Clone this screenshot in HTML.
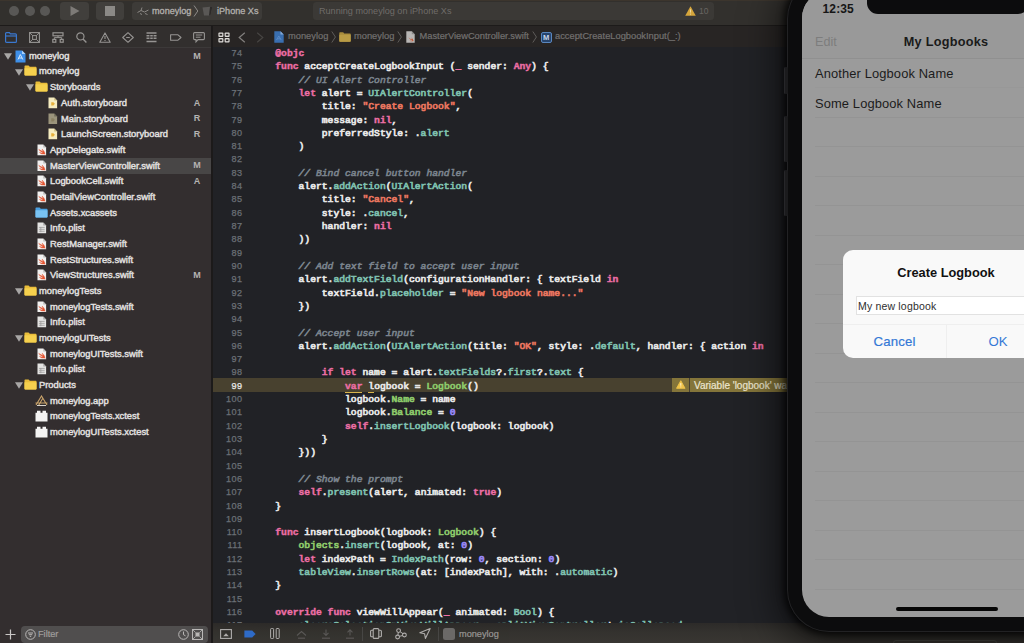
<!DOCTYPE html>
<html><head><meta charset="utf-8"><title>Xcode - moneylog</title>
<style>
*{box-sizing:border-box;margin:0;padding:0}
html,body{width:1024px;height:643px;overflow:hidden;background:#212226}
body{position:relative;font-family:"Liberation Sans",sans-serif;-webkit-font-smoothing:antialiased}
.abs{position:absolute}
/* toolbar */
#toolbar{position:absolute;left:0;top:0;width:1024px;height:25px;background:#32302d}
#toolbar .sep{position:absolute;left:0;top:25px;width:1024px;height:1px;background:#1d1b1a}
.tl{position:absolute;top:6px;width:10px;height:10px;border-radius:50%;background:#585755}
.tbtn{position:absolute;top:2px;height:18px;border-radius:3.5px;background:#413f3c}
.tbox{position:absolute;top:2px;height:18px;border-radius:3.5px;background:#3d3b38}
.ttext{position:absolute;top:2px;height:18px;line-height:18.5px;font-size:9.1px;white-space:nowrap}
/* sidebar */
#sidebar{position:absolute;left:0;top:26px;width:211px;height:617px;background:#332e2f}
#navtabs{position:absolute;left:0;top:0;width:211px;height:22px;background:#322f2e;border-bottom:1px solid #3c3939}
#vsep{position:absolute;left:211px;top:26px;width:2px;height:617px;background:#1c1a1a}
.row{position:absolute;left:0;width:211px;height:15.68px}
.row.sel{background:#484646}
.row .tri{position:absolute;top:4.5px}
.row .ic{position:absolute;top:1.3px}
.row .lb{position:absolute;top:0.3px;height:15.68px;line-height:15.8px;font-size:9.35px;color:#e3e1e0;white-space:nowrap;-webkit-text-stroke:0.42px #e3e1e0}
.row .st{position:absolute;left:190px;width:14px;text-align:center;top:0;line-height:15.8px;font-size:9px;font-weight:bold;color:#b5b3b2}
#filter{position:absolute;left:21px;top:600px;width:187px;height:17px;border-radius:4px;background:#504e4e}
/* editor */
#jump{position:absolute;left:213px;top:26px;width:811px;height:21px;background:#282524}
#editor{position:absolute;left:213px;top:47px;width:811px;height:576px;background:#212226;overflow:hidden}
.ln{position:absolute;left:0;width:811px;height:13.31px;line-height:13.31px;font-family:"Liberation Mono",monospace;font-size:9.7px;color:#e6e6e6;white-space:pre;-webkit-text-stroke:0.72px}
.ln .no{position:absolute;left:0;width:29.6px;text-align:right;color:#6b7076;font-size:9.1px;letter-spacing:0.45px;font-family:"Liberation Sans",sans-serif;-webkit-text-stroke:0.25px}
.ln .cd{position:absolute;left:39px}
.ln.hl .no{color:#e8e8e8}
.k{color:#ee6fa6;font-weight:bold;-webkit-text-stroke:0.4px}
.ku{color:#ee6fa6;font-weight:bold;-webkit-text-stroke:0.4px;border-bottom:1px solid #d9b44a}
.u{border-bottom:1px solid #d9b44a}
.t{color:#7dbfad}
.f{color:#7dbfad}
.g{color:#8cc86a}
.s{color:#e8755f}
.n{color:#9686f5}
.c{color:#7a838d;font-style:italic;-webkit-text-stroke:0.6px}
#hlrow{position:absolute;left:0;top:331px;width:575px;height:14px;background:#48412f}
#dbg{position:absolute;left:213px;top:622.5px;width:811px;height:21px;background:linear-gradient(180deg,#2d2b29 0%,#35332f 45%,#3a3733 100%);opacity:.95}
.jt{position:absolute;top:0;height:21px;line-height:21.5px;font-size:9.3px;color:#737170;white-space:nowrap;-webkit-text-stroke:0.2px #737170}
.chev{position:absolute;top:5px;width:6px;height:12px;fill:none;stroke:#5e5c5a;stroke-width:1}
/* phone */
#phoneshadow{display:none}
#bezel{position:absolute;left:787px;top:-23px;width:320px;height:655px;border-radius:42px;background:#0c0c0d;box-shadow:0 0 0 1px #222224 inset, 0 0 7px 3px rgba(0,0,0,.75), 0 6px 36px 10px rgba(0,0,0,.55)}
#screen{position:absolute;left:802px;top:-9px;width:288px;height:626px;border-radius:27px;background:#9b9b9b;overflow:hidden}
#screen .line{position:absolute;left:13px;right:0;height:1px;background:#949494}
#notch{position:absolute;left:65px;top:0;width:162px;height:22.5px;border-radius:0 0 11px 11px;background:#0c0c0d}
.ptxt{position:absolute;white-space:nowrap;color:#161616}
#alert{position:absolute;left:41px;top:259px;width:206px;height:108px;border-radius:10px;background:#f9f9f9;overflow:hidden}
</style></head>
<body>
<!-- ======= toolbar ======= -->
<div id="toolbar">
  <div class="tl" style="left:9px"></div><div class="tl" style="left:24.5px"></div><div class="tl" style="left:40px"></div>
  <div class="tbtn" style="left:60px;width:29px"><svg class="abs" style="left:10px;top:4px" width="10" height="10" viewBox="0 0 10 10"><path d="M0.5 0L9.5 5L0.5 10Z" fill="#7d7a77"/></svg></div>
  <div class="tbtn" style="left:96px;width:28px"><div class="abs" style="left:9px;top:4px;width:10px;height:10px;background:#8b8986"></div></div>
  <div class="tbox" style="left:132px;width:130px"></div>
  <svg class="abs" style="left:137px;top:6px" width="12" height="10" viewBox="0 0 12 10"><path d="M0.5 6.5L4 4.5L5 1.5M4 4.5L7.5 6L11.5 4M3 7.5L5 8.5M8 7.5L10.5 8.5" stroke="#8a8784" stroke-width="1" fill="none"/></svg>
  <div class="ttext" style="left:152px;color:#b3b0ad;-webkit-text-stroke:0.3px #b3b0ad">moneylog</div>
  <svg class="abs" style="left:193px;top:5px" width="6" height="12" viewBox="0 0 6 12"><path d="M1 0.5L4.8 6L1 11.5" stroke="#8e8b88" stroke-width="1" fill="none"/></svg>
  <svg class="abs" style="left:202px;top:6px" width="11" height="10" viewBox="0 0 11 10"><path d="M0.5 1.5L8 0.8L10.5 0.5L8.5 9.5H2Z" fill="#5a5856"/><path d="M8 0.8L10.5 0.5L8.5 9.5L7 9.5Z" fill="#2c2a29"/></svg>
  <div class="ttext" style="left:217px;color:#b3b0ad;-webkit-text-stroke:0.3px #b3b0ad">iPhone Xs</div>
  <div class="tbox" style="left:312.5px;width:401px;background:#3b3936"></div>
  <div class="ttext" style="left:319px;color:#6f6c69">Running moneylog on iPhone Xs</div>
  <svg class="abs" style="left:684.5px;top:6px" width="11" height="10" viewBox="0 0 11 10"><path d="M5.5 0.3L10.8 9.7H0.2Z" fill="#d6a63c"/><path d="M5.5 3.3V6.6M5.5 7.6V8.6" stroke="#f1dca0" stroke-width="1"/></svg>
  <div class="ttext" style="left:699px;color:#686562;font-size:8.5px">10</div>
  <div class="sep"></div>
  <div class="abs" style="left:0;top:0;width:1024px;height:1px;background:rgba(120,85,45,.15)"></div>
</div>

<!-- ======= sidebar ======= -->
<div id="sidebar">
  <div id="navtabs">
  <svg class="abs" style="left:5px;top:6px" width="12" height="11" viewBox="0 0 12 11"><path d="M0.6 1.6Q0.6 0.6 1.6 0.6H4.4L5.4 1.8H10.4Q11.4 1.8 11.4 2.8V9.4Q11.4 10.4 10.4 10.4H1.6Q0.6 10.4 0.6 9.4Z" stroke="#3a78cf" stroke-width="1.2" fill="none"/><path d="M0.6 4H11.4" stroke="#3a78cf" stroke-width="1.2"/></svg>
  <svg class="abs" style="left:29px;top:6px" width="11" height="11" viewBox="0 0 11 11"><rect x="0.6" y="0.6" width="9.8" height="9.8" stroke="#969492" stroke-width="1.1" fill="none"/><rect x="3.6" y="3.6" width="3.8" height="3.8" stroke="#969492" stroke-width="1" fill="none"/><path d="M0.6 0.6L3.6 3.6M10.4 0.6L7.4 3.6M0.6 10.4L3.6 7.4M10.4 10.4L7.4 7.4" stroke="#969492" stroke-width="0.9"/></svg>
  <svg class="abs" style="left:52px;top:6px" width="12" height="11" viewBox="0 0 12 11"><rect x="1" y="0.8" width="10" height="3" stroke="#969492" stroke-width="1.2" fill="none"/><rect x="0.8" y="7.4" width="3" height="2.8" stroke="#969492" stroke-width="1.2" fill="none"/><rect x="8.2" y="7.4" width="3" height="2.8" stroke="#969492" stroke-width="1.2" fill="none"/><path d="M2.3 7.4V5.6H9.7V7.4M6 3.8V5.6" stroke="#969492" stroke-width="1" fill="none"/></svg>
  <svg class="abs" style="left:76px;top:6px" width="11" height="11" viewBox="0 0 11 11"><circle cx="4.4" cy="4.4" r="3.6" stroke="#969492" stroke-width="1.2" fill="none"/><path d="M7 7L10.4 10.4" stroke="#969492" stroke-width="1.4"/></svg>
  <svg class="abs" style="left:99px;top:6px" width="12" height="11" viewBox="0 0 12 11"><path d="M6 0.9L11.2 10.2H0.8Z" stroke="#969492" stroke-width="1.1" fill="none" stroke-linejoin="round"/><path d="M6 4V7M6 8V9" stroke="#969492" stroke-width="1.1"/></svg>
  <svg class="abs" style="left:122px;top:6px" width="12" height="11" viewBox="0 0 12 11"><path d="M6 0.7L11.3 5.5L6 10.3L0.7 5.5Z" stroke="#969492" stroke-width="1.1" fill="none" stroke-linejoin="round"/><path d="M4.2 5.5H7.8" stroke="#969492" stroke-width="1.1"/></svg>
  <svg class="abs" style="left:146px;top:6px" width="11" height="11" viewBox="0 0 11 11"><path d="M0.5 1H10.5M0.5 3.7H10.5M0.5 6.3H10.5M0.5 9.4H10.5" stroke="#969492" stroke-width="1.5"/><path d="M3.8 3V7M7.2 3V7" stroke="#322f2e" stroke-width="0.8"/></svg>
  <svg class="abs" style="left:170px;top:8px" width="12" height="7" viewBox="0 0 12 7"><path d="M0.6 0.8H8L11 3.5L8 6.2H0.6Z" stroke="#969492" stroke-width="1.1" fill="none" stroke-linejoin="round"/></svg>
  <svg class="abs" style="left:193px;top:6px" width="12" height="11" viewBox="0 0 12 11"><path d="M1.6 0.6H10.4Q11.4 0.6 11.4 1.6V6.6Q11.4 7.6 10.4 7.6H5L3 9.8V7.6H1.6Q0.6 7.6 0.6 6.6V1.6Q0.6 0.6 1.6 0.6Z" stroke="#969492" stroke-width="1.1" fill="none"/><path d="M2.8 3H9.2M2.8 5.2H7.5" stroke="#969492" stroke-width="1"/></svg>
</div>
</div>
<div id="rows" class="abs" style="left:0;top:0;width:211px;height:643px">
<div class="row" style="top:48.50px"><svg class="tri" style="left:4px" width="8" height="7" viewBox="0 0 8 7"><path d="M0 0.3H8L4 6.7Z" fill="#a8a6a5"/></svg><svg class="ic" style="left:15px" width="11" height="13" viewBox="0 0 11 13"><path d="M0.5 0.5H7L10.5 4V12.5H0.5Z" fill="#3f8fe8"/><path d="M7 0.5L10.5 4H7Z" fill="#a9d0f8"/><path d="M3 9.5L5.3 4.5L7.8 9.5M3.6 8H7.2" stroke="#d6e9fb" stroke-width="1" fill="none"/></svg><span class="lb" style="left:29px">moneylog</span><span class="st">M</span></div>
<div class="row" style="top:64.18px"><svg class="tri" style="left:15px" width="8" height="7" viewBox="0 0 8 7"><path d="M0 0.3H8L4 6.7Z" fill="#a8a6a5"/></svg><svg class="ic" style="left:24px" width="13" height="11" viewBox="0 0 13 11"><path d="M0.5 1.2Q0.5 0.5 1.2 0.5H4.6L5.8 1.8H11.8Q12.5 1.8 12.5 2.5V9.8Q12.5 10.5 11.8 10.5H1.2Q0.5 10.5 0.5 9.8Z" fill="#e9bd3a"/><path d="M0.5 3.2H12.5V9.8Q12.5 10.5 11.8 10.5H1.2Q0.5 10.5 0.5 9.8Z" fill="#f5d04e"/></svg><span class="lb" style="left:39px">moneylog</span></div>
<div class="row" style="top:79.86px"><svg class="tri" style="left:26px" width="8" height="7" viewBox="0 0 8 7"><path d="M0 0.3H8L4 6.7Z" fill="#a8a6a5"/></svg><svg class="ic" style="left:35px" width="13" height="11" viewBox="0 0 13 11"><path d="M0.5 1.2Q0.5 0.5 1.2 0.5H4.6L5.8 1.8H11.8Q12.5 1.8 12.5 2.5V9.8Q12.5 10.5 11.8 10.5H1.2Q0.5 10.5 0.5 9.8Z" fill="#e9bd3a"/><path d="M0.5 3.2H12.5V9.8Q12.5 10.5 11.8 10.5H1.2Q0.5 10.5 0.5 9.8Z" fill="#f5d04e"/></svg><span class="lb" style="left:50px">Storyboards</span></div>
<div class="row" style="top:95.54px"><svg class="ic" style="left:48px" width="9.6" height="11.8" viewBox="0 0 10 12"><path d="M0.5 0.5H6.5L9.5 3.5V11.5H0.5Z" fill="#f6ecc0"/><path d="M6.5 0.5L9.5 3.5H6.5Z" fill="#c9bc86"/><path d="M3.4 5.4H5.6L7.2 7L5.6 8.6H3.4Z" fill="#e6b03c"/></svg><span class="lb" style="left:61px">Auth.storyboard</span><span class="st">A</span></div>
<div class="row" style="top:111.22px"><svg class="ic" style="left:48px" width="9.6" height="11.8" viewBox="0 0 10 12"><path d="M0.5 0.5H6.5L9.5 3.5V11.5H0.5Z" fill="#9b947c"/><path d="M6.5 0.5L9.5 3.5H6.5Z" fill="#6f6a58"/><path d="M3.4 5.4H5.6L7.2 7L5.6 8.6H3.4Z" fill="#8a8062"/></svg><span class="lb" style="left:61px">Main.storyboard</span><span class="st">R</span></div>
<div class="row" style="top:126.90px"><svg class="ic" style="left:48px" width="9.6" height="11.8" viewBox="0 0 10 12"><path d="M0.5 0.5H6.5L9.5 3.5V11.5H0.5Z" fill="#f6ecc0"/><path d="M6.5 0.5L9.5 3.5H6.5Z" fill="#c9bc86"/><path d="M3.4 5.4H5.6L7.2 7L5.6 8.6H3.4Z" fill="#e6b03c"/></svg><span class="lb" style="left:61px">LaunchScreen.storyboard</span><span class="st">R</span></div>
<div class="row" style="top:142.58px"><svg class="ic" style="left:37px" width="9.6" height="11.8" viewBox="0 0 10 12"><path d="M0.5 0.5H6.5L9.5 3.5V11.5H0.5Z" fill="#f1f0ef"/><path d="M6.5 0.5L9.5 3.5H6.5Z" fill="#bdbcbb"/><path d="M1.8 5.6Q4 8 6.4 9Q4.6 9.8 2.6 8.6Q4.8 10.9 7.8 10.2Q8.2 10 8.4 10.6Q8.6 8.2 5.4 5.2Q6.4 6.8 6.2 7.8Q4 6.8 1.8 5.6Z" fill="#e5532f" stroke="#e5532f" stroke-width="0.5" stroke-linejoin="round"/></svg><span class="lb" style="left:50px">AppDelegate.swift</span></div>
<div class="row sel" style="top:158.26px"><svg class="ic" style="left:37px" width="9.6" height="11.8" viewBox="0 0 10 12"><path d="M0.5 0.5H6.5L9.5 3.5V11.5H0.5Z" fill="#f1f0ef"/><path d="M6.5 0.5L9.5 3.5H6.5Z" fill="#bdbcbb"/><path d="M1.8 5.6Q4 8 6.4 9Q4.6 9.8 2.6 8.6Q4.8 10.9 7.8 10.2Q8.2 10 8.4 10.6Q8.6 8.2 5.4 5.2Q6.4 6.8 6.2 7.8Q4 6.8 1.8 5.6Z" fill="#e5532f" stroke="#e5532f" stroke-width="0.5" stroke-linejoin="round"/></svg><span class="lb" style="left:50px">MasterViewController.swift</span><span class="st">M</span></div>
<div class="row" style="top:173.94px"><svg class="ic" style="left:37px" width="9.6" height="11.8" viewBox="0 0 10 12"><path d="M0.5 0.5H6.5L9.5 3.5V11.5H0.5Z" fill="#f1f0ef"/><path d="M6.5 0.5L9.5 3.5H6.5Z" fill="#bdbcbb"/><path d="M1.8 5.6Q4 8 6.4 9Q4.6 9.8 2.6 8.6Q4.8 10.9 7.8 10.2Q8.2 10 8.4 10.6Q8.6 8.2 5.4 5.2Q6.4 6.8 6.2 7.8Q4 6.8 1.8 5.6Z" fill="#e5532f" stroke="#e5532f" stroke-width="0.5" stroke-linejoin="round"/></svg><span class="lb" style="left:50px">LogbookCell.swift</span><span class="st">A</span></div>
<div class="row" style="top:189.62px"><svg class="ic" style="left:37px" width="9.6" height="11.8" viewBox="0 0 10 12"><path d="M0.5 0.5H6.5L9.5 3.5V11.5H0.5Z" fill="#f1f0ef"/><path d="M6.5 0.5L9.5 3.5H6.5Z" fill="#bdbcbb"/><path d="M1.8 5.6Q4 8 6.4 9Q4.6 9.8 2.6 8.6Q4.8 10.9 7.8 10.2Q8.2 10 8.4 10.6Q8.6 8.2 5.4 5.2Q6.4 6.8 6.2 7.8Q4 6.8 1.8 5.6Z" fill="#e5532f" stroke="#e5532f" stroke-width="0.5" stroke-linejoin="round"/></svg><span class="lb" style="left:50px">DetailViewController.swift</span></div>
<div class="row" style="top:205.30px"><svg class="ic" style="left:35px" width="13" height="11" viewBox="0 0 13 11"><path d="M0.5 1.2Q0.5 0.5 1.2 0.5H4.6L5.8 1.8H11.8Q12.5 1.8 12.5 2.5V9.8Q12.5 10.5 11.8 10.5H1.2Q0.5 10.5 0.5 9.8Z" fill="#4a9fe0"/><path d="M0.5 3.2H12.5V9.8Q12.5 10.5 11.8 10.5H1.2Q0.5 10.5 0.5 9.8Z" fill="#79c2f2"/></svg><span class="lb" style="left:50px">Assets.xcassets</span></div>
<div class="row" style="top:220.98px"><svg class="ic" style="left:37px" width="9.6" height="11.8" viewBox="0 0 10 12"><path d="M0.5 0.5H6.5L9.5 3.5V11.5H0.5Z" fill="#e4e3e2"/><path d="M6.5 0.5L9.5 3.5H6.5Z" fill="#a9a8a7"/><path d="M2 5.5H8M2 7.5H8M2 9.5H8M4 5V10.5" stroke="#9a9999" stroke-width="0.8"/></svg><span class="lb" style="left:50px">Info.plist</span></div>
<div class="row" style="top:236.66px"><svg class="ic" style="left:37px" width="9.6" height="11.8" viewBox="0 0 10 12"><path d="M0.5 0.5H6.5L9.5 3.5V11.5H0.5Z" fill="#f1f0ef"/><path d="M6.5 0.5L9.5 3.5H6.5Z" fill="#bdbcbb"/><path d="M1.8 5.6Q4 8 6.4 9Q4.6 9.8 2.6 8.6Q4.8 10.9 7.8 10.2Q8.2 10 8.4 10.6Q8.6 8.2 5.4 5.2Q6.4 6.8 6.2 7.8Q4 6.8 1.8 5.6Z" fill="#e5532f" stroke="#e5532f" stroke-width="0.5" stroke-linejoin="round"/></svg><span class="lb" style="left:50px">RestManager.swift</span></div>
<div class="row" style="top:252.34px"><svg class="ic" style="left:37px" width="9.6" height="11.8" viewBox="0 0 10 12"><path d="M0.5 0.5H6.5L9.5 3.5V11.5H0.5Z" fill="#f1f0ef"/><path d="M6.5 0.5L9.5 3.5H6.5Z" fill="#bdbcbb"/><path d="M1.8 5.6Q4 8 6.4 9Q4.6 9.8 2.6 8.6Q4.8 10.9 7.8 10.2Q8.2 10 8.4 10.6Q8.6 8.2 5.4 5.2Q6.4 6.8 6.2 7.8Q4 6.8 1.8 5.6Z" fill="#e5532f" stroke="#e5532f" stroke-width="0.5" stroke-linejoin="round"/></svg><span class="lb" style="left:50px">RestStructures.swift</span></div>
<div class="row" style="top:268.02px"><svg class="ic" style="left:37px" width="9.6" height="11.8" viewBox="0 0 10 12"><path d="M0.5 0.5H6.5L9.5 3.5V11.5H0.5Z" fill="#f1f0ef"/><path d="M6.5 0.5L9.5 3.5H6.5Z" fill="#bdbcbb"/><path d="M1.8 5.6Q4 8 6.4 9Q4.6 9.8 2.6 8.6Q4.8 10.9 7.8 10.2Q8.2 10 8.4 10.6Q8.6 8.2 5.4 5.2Q6.4 6.8 6.2 7.8Q4 6.8 1.8 5.6Z" fill="#e5532f" stroke="#e5532f" stroke-width="0.5" stroke-linejoin="round"/></svg><span class="lb" style="left:50px">ViewStructures.swift</span><span class="st">M</span></div>
<div class="row" style="top:283.70px"><svg class="tri" style="left:15px" width="8" height="7" viewBox="0 0 8 7"><path d="M0 0.3H8L4 6.7Z" fill="#a8a6a5"/></svg><svg class="ic" style="left:24px" width="13" height="11" viewBox="0 0 13 11"><path d="M0.5 1.2Q0.5 0.5 1.2 0.5H4.6L5.8 1.8H11.8Q12.5 1.8 12.5 2.5V9.8Q12.5 10.5 11.8 10.5H1.2Q0.5 10.5 0.5 9.8Z" fill="#e9bd3a"/><path d="M0.5 3.2H12.5V9.8Q12.5 10.5 11.8 10.5H1.2Q0.5 10.5 0.5 9.8Z" fill="#f5d04e"/></svg><span class="lb" style="left:39px">moneylogTests</span></div>
<div class="row" style="top:299.38px"><svg class="ic" style="left:37px" width="9.6" height="11.8" viewBox="0 0 10 12"><path d="M0.5 0.5H6.5L9.5 3.5V11.5H0.5Z" fill="#f1f0ef"/><path d="M6.5 0.5L9.5 3.5H6.5Z" fill="#bdbcbb"/><path d="M1.8 5.6Q4 8 6.4 9Q4.6 9.8 2.6 8.6Q4.8 10.9 7.8 10.2Q8.2 10 8.4 10.6Q8.6 8.2 5.4 5.2Q6.4 6.8 6.2 7.8Q4 6.8 1.8 5.6Z" fill="#e5532f" stroke="#e5532f" stroke-width="0.5" stroke-linejoin="round"/></svg><span class="lb" style="left:50px">moneylogTests.swift</span></div>
<div class="row" style="top:315.06px"><svg class="ic" style="left:37px" width="9.6" height="11.8" viewBox="0 0 10 12"><path d="M0.5 0.5H6.5L9.5 3.5V11.5H0.5Z" fill="#e4e3e2"/><path d="M6.5 0.5L9.5 3.5H6.5Z" fill="#a9a8a7"/><path d="M2 5.5H8M2 7.5H8M2 9.5H8M4 5V10.5" stroke="#9a9999" stroke-width="0.8"/></svg><span class="lb" style="left:50px">Info.plist</span></div>
<div class="row" style="top:330.74px"><svg class="tri" style="left:15px" width="8" height="7" viewBox="0 0 8 7"><path d="M0 0.3H8L4 6.7Z" fill="#a8a6a5"/></svg><svg class="ic" style="left:24px" width="13" height="11" viewBox="0 0 13 11"><path d="M0.5 1.2Q0.5 0.5 1.2 0.5H4.6L5.8 1.8H11.8Q12.5 1.8 12.5 2.5V9.8Q12.5 10.5 11.8 10.5H1.2Q0.5 10.5 0.5 9.8Z" fill="#e9bd3a"/><path d="M0.5 3.2H12.5V9.8Q12.5 10.5 11.8 10.5H1.2Q0.5 10.5 0.5 9.8Z" fill="#f5d04e"/></svg><span class="lb" style="left:39px">moneylogUITests</span></div>
<div class="row" style="top:346.42px"><svg class="ic" style="left:37px" width="9.6" height="11.8" viewBox="0 0 10 12"><path d="M0.5 0.5H6.5L9.5 3.5V11.5H0.5Z" fill="#f1f0ef"/><path d="M6.5 0.5L9.5 3.5H6.5Z" fill="#bdbcbb"/><path d="M1.8 5.6Q4 8 6.4 9Q4.6 9.8 2.6 8.6Q4.8 10.9 7.8 10.2Q8.2 10 8.4 10.6Q8.6 8.2 5.4 5.2Q6.4 6.8 6.2 7.8Q4 6.8 1.8 5.6Z" fill="#e5532f" stroke="#e5532f" stroke-width="0.5" stroke-linejoin="round"/></svg><span class="lb" style="left:50px">moneylogUITests.swift</span></div>
<div class="row" style="top:362.10px"><svg class="ic" style="left:37px" width="9.6" height="11.8" viewBox="0 0 10 12"><path d="M0.5 0.5H6.5L9.5 3.5V11.5H0.5Z" fill="#e4e3e2"/><path d="M6.5 0.5L9.5 3.5H6.5Z" fill="#a9a8a7"/><path d="M2 5.5H8M2 7.5H8M2 9.5H8M4 5V10.5" stroke="#9a9999" stroke-width="0.8"/></svg><span class="lb" style="left:50px">Info.plist</span></div>
<div class="row" style="top:377.78px"><svg class="tri" style="left:15px" width="8" height="7" viewBox="0 0 8 7"><path d="M0 0.3H8L4 6.7Z" fill="#a8a6a5"/></svg><svg class="ic" style="left:24px" width="13" height="11" viewBox="0 0 13 11"><path d="M0.5 1.2Q0.5 0.5 1.2 0.5H4.6L5.8 1.8H11.8Q12.5 1.8 12.5 2.5V9.8Q12.5 10.5 11.8 10.5H1.2Q0.5 10.5 0.5 9.8Z" fill="#e9bd3a"/><path d="M0.5 3.2H12.5V9.8Q12.5 10.5 11.8 10.5H1.2Q0.5 10.5 0.5 9.8Z" fill="#f5d04e"/></svg><span class="lb" style="left:39px">Products</span></div>
<div class="row" style="top:393.46px"><svg class="ic" style="left:35px" width="13" height="12" viewBox="0 0 13 12"><path d="M1 10L6.5 1L12 10M0.5 8H12.5M3.5 10.5L8 3" stroke="#c9a36a" stroke-width="1.1" fill="none"/><path d="M2 10.5H11" stroke="#d9d4cc" stroke-width="1"/></svg><span class="lb" style="left:50px">moneylog.app</span></div>
<div class="row" style="top:409.14px"><svg class="ic" style="left:35px" width="13" height="12" viewBox="0 0 13 11" preserveAspectRatio="none"><path d="M0.5 2.5H2V0.8H5.5V2.5H7.5V0.8H11V2.5H12.5V10.5H0.5Z" fill="#f4f3f2"/></svg><span class="lb" style="left:50px">moneylogTests.xctest</span></div>
<div class="row" style="top:424.82px"><svg class="ic" style="left:35px" width="13" height="12" viewBox="0 0 13 11" preserveAspectRatio="none"><path d="M0.5 2.5H2V0.8H5.5V2.5H7.5V0.8H11V2.5H12.5V10.5H0.5Z" fill="#f4f3f2"/></svg><span class="lb" style="left:50px">moneylogUITests.xctest</span></div>
</div>
<div class="abs" style="left:0;top:26px;width:211px;height:617px;pointer-events:none">
  <svg class="abs" style="left:5px;top:603px" width="11" height="11" viewBox="0 0 11 11"><path d="M5.5 0.5V10.5M0.5 5.5H10.5" stroke="#c9c7c6" stroke-width="1.2"/></svg>
  <div id="filter">
    <svg class="abs" style="left:4px;top:3px" width="11" height="11" viewBox="0 0 11 11"><circle cx="5.5" cy="5.5" r="4.8" stroke="#b9b7b6" stroke-width="1" fill="none"/><path d="M3 4H8M3.8 5.7H7.2M4.8 7.4H6.2" stroke="#b9b7b6" stroke-width="1"/></svg>
    <div class="abs" style="left:17px;top:0;line-height:17px;font-size:9.2px;color:#a09e9d;-webkit-text-stroke:0.2px #a09e9d">Filter</div>
    <svg class="abs" style="left:157px;top:3px" width="11" height="11" viewBox="0 0 11 11"><circle cx="5.5" cy="5.5" r="4.8" stroke="#b9b7b6" stroke-width="1" fill="none"/><path d="M5.5 2.5V5.7L7.5 6.8" stroke="#b9b7b6" stroke-width="1" fill="none"/></svg>
    <svg class="abs" style="left:171px;top:3px" width="11" height="11" viewBox="0 0 11 11"><rect x="0.5" y="0.5" width="10" height="10" stroke="#b9b7b6" fill="none"/><rect x="3.5" y="3.5" width="4" height="4" fill="#b9b7b6"/><path d="M0.5 0.5L3.5 3.5M10.5 0.5L7.5 3.5M0.5 10.5L3.5 7.5M10.5 10.5L7.5 7.5" stroke="#b9b7b6" stroke-width="0.8"/></svg>
  </div>
</div>
<div id="vsep"></div>

<!-- ======= editor ======= -->
<div id="jump">
  <svg class="abs" style="left:4.5px;top:6px" width="12" height="11" viewBox="0 0 12 11"><rect x="0.4" y="0.4" width="5" height="4.6" rx="1" fill="#dcdad7"/><rect x="6.6" y="0.4" width="5" height="4.6" rx="1" fill="#dcdad7"/><rect x="0.4" y="6" width="5" height="4.6" rx="1" fill="#dcdad7"/><rect x="6.6" y="6" width="5" height="4.6" rx="1" fill="#dcdad7"/><rect x="1.6" y="1.8" width="2.6" height="1.8" fill="#282524"/><rect x="7.8" y="1.8" width="2.6" height="1.8" fill="#282524"/><rect x="1.6" y="7.4" width="2.6" height="1.8" fill="#282524"/><rect x="7.8" y="7.4" width="2.6" height="1.8" fill="#282524"/></svg>
  <svg class="abs" style="left:25px;top:6px" width="8" height="11" viewBox="0 0 8 11"><path d="M6.8 0.8L1.2 5.5L6.8 10.2" stroke="#83817f" stroke-width="1.2" fill="none"/></svg>
  <svg class="abs" style="left:43px;top:6px" width="8" height="11" viewBox="0 0 8 11"><path d="M1.2 0.8L6.8 5.5L1.2 10.2" stroke="#474543" stroke-width="1.2" fill="none"/></svg>
  <svg class="abs" style="left:60.5px;top:5px" width="10" height="12" viewBox="0 0 10 12"><path d="M0.3 0.3H6.5L9.7 3.5V11.7H0.3Z" fill="#3a6fb0"/><path d="M6.5 0.3L9.7 3.5H6.5Z" fill="#86aad4"/><path d="M2.5 9L4.8 5L7.2 9M3.2 7.8H6.6" stroke="#5d8cc6" stroke-width="0.9" fill="none"/></svg>
  <div class="jt" style="left:75px">moneylog</div>
  <svg class="chev" style="left:118px"><path d="M0.8 0.5L4.4 6L0.8 11.5"/></svg>
  <svg class="abs" style="left:125.5px;top:6px" width="12" height="10" viewBox="0 0 12 10"><path d="M0.3 1Q0.3 0.3 1 0.3H4.2L5.2 1.4H11Q11.7 1.4 11.7 2.1V9Q11.7 9.7 11 9.7H1Q0.3 9.7 0.3 9Z" fill="#a88c3c"/><path d="M0.3 2.8H11.7V9Q11.7 9.7 11 9.7H1Q0.3 9.7 0.3 9Z" fill="#b99c46"/></svg>
  <div class="jt" style="left:141px">moneylog</div>
  <svg class="chev" style="left:184px"><path d="M0.8 0.5L4.4 6L0.8 11.5"/></svg>
  <svg class="abs" style="left:192.5px;top:5px" width="9" height="12" viewBox="0 0 9 12"><path d="M0.3 0.3H5.8L8.7 3.2V11.7H0.3Z" fill="#b8b6b4"/><path d="M5.8 0.3L8.7 3.2H5.8Z" fill="#8a8886"/><path d="M2.4 6.4Q4.2 8.6 6.6 9.6Q5 10.2 3.4 9.4Q5.2 10.8 7.6 10Q7.2 8 5 6.2Q6 7.6 6.2 8.6Q4.2 7.6 2.4 6.4Z" fill="#c2522f"/></svg>
  <div class="jt" style="left:206.5px">MasterViewController.swift</div>
  <svg class="chev" style="left:319px"><path d="M0.8 0.5L4.4 6L0.8 11.5"/></svg>
  <div class="abs" style="left:327.5px;top:5.5px;width:11px;height:11px;border-radius:2px;border:1px solid #5a86bd;background:#27456e;color:#c9d6e8;font-size:7.5px;font-weight:bold;line-height:9.5px;text-align:center">M</div>
  <div class="jt" style="left:342px">acceptCreateLogbookInput(_:)</div>
</div>
<div id="editor">
  <div id="hlrow"></div>
  <div id="code">
<div class="ln" style="top:0.00px"><span class="no">74</span><span class="cd">    <span class="k">@objc</span></span></div>
<div class="ln" style="top:13.31px"><span class="no">75</span><span class="cd">    <span class="k">func</span> acceptCreateLogbookInput (<span class="k">_</span> sender: <span class="k">Any</span>) {</span></div>
<div class="ln" style="top:26.62px"><span class="no">76</span><span class="cd">        <span class="c">// UI Alert Controller</span></span></div>
<div class="ln" style="top:39.93px"><span class="no">77</span><span class="cd">        <span class="k">let</span> alert = <span class="t">UIAlertController</span>(</span></div>
<div class="ln" style="top:53.24px"><span class="no">78</span><span class="cd">            title: <span class="s">"Create Logbook"</span>,</span></div>
<div class="ln" style="top:66.55px"><span class="no">79</span><span class="cd">            message: <span class="k">nil</span>,</span></div>
<div class="ln" style="top:79.86px"><span class="no">80</span><span class="cd">            preferredStyle: .<span class="t">alert</span></span></div>
<div class="ln" style="top:93.17px"><span class="no">81</span><span class="cd">        )</span></div>
<div class="ln" style="top:106.48px"><span class="no">82</span><span class="cd"></span></div>
<div class="ln" style="top:119.79px"><span class="no">83</span><span class="cd">        <span class="c">// Bind cancel button handler</span></span></div>
<div class="ln" style="top:133.10px"><span class="no">84</span><span class="cd">        alert.<span class="t">addAction</span>(<span class="t">UIAlertAction</span>(</span></div>
<div class="ln" style="top:146.41px"><span class="no">85</span><span class="cd">            title: <span class="s">"Cancel"</span>,</span></div>
<div class="ln" style="top:159.72px"><span class="no">86</span><span class="cd">            style: .<span class="t">cancel</span>,</span></div>
<div class="ln" style="top:173.03px"><span class="no">87</span><span class="cd">            handler: <span class="k">nil</span></span></div>
<div class="ln" style="top:186.34px"><span class="no">88</span><span class="cd">        ))</span></div>
<div class="ln" style="top:199.65px"><span class="no">89</span><span class="cd"></span></div>
<div class="ln" style="top:212.96px"><span class="no">90</span><span class="cd">        <span class="c">// Add text field to accept user input</span></span></div>
<div class="ln" style="top:226.27px"><span class="no">91</span><span class="cd">        alert.<span class="t">addTextField</span>(configurationHandler: { textField <span class="k">in</span></span></div>
<div class="ln" style="top:239.58px"><span class="no">92</span><span class="cd">            textField.<span class="t">placeholder</span> = <span class="s">"New logbook name..."</span></span></div>
<div class="ln" style="top:252.89px"><span class="no">93</span><span class="cd">        })</span></div>
<div class="ln" style="top:266.20px"><span class="no">94</span><span class="cd"></span></div>
<div class="ln" style="top:279.51px"><span class="no">95</span><span class="cd">        <span class="c">// Accept user input</span></span></div>
<div class="ln" style="top:292.82px"><span class="no">96</span><span class="cd">        alert.<span class="t">addAction</span>(<span class="t">UIAlertAction</span>(title: <span class="s">"OK"</span>, style: .<span class="t">default</span>, handler: { action <span class="k">in</span></span></div>
<div class="ln" style="top:306.13px"><span class="no">97</span><span class="cd"></span></div>
<div class="ln" style="top:319.44px"><span class="no">98</span><span class="cd">            <span class="k">if let</span> name = alert.<span class="t">textFields</span>?.<span class="t">first</span>?.<span class="t">text</span> {</span></div>
<div class="ln hl" style="top:332.75px"><span class="no">99</span><span class="cd">                <span class="ku">var</span> <span class="u">l</span>ogbook = <span class="g">Logbook</span>()</span></div>
<div class="ln" style="top:346.06px"><span class="no">100</span><span class="cd">                logbook.<span class="g">Name</span> = name</span></div>
<div class="ln" style="top:359.37px"><span class="no">101</span><span class="cd">                logbook.<span class="g">Balance</span> = <span class="n">0</span></span></div>
<div class="ln" style="top:372.68px"><span class="no">102</span><span class="cd">                <span class="k">self</span>.<span class="f">insertLogbook</span>(logbook: logbook)</span></div>
<div class="ln" style="top:385.99px"><span class="no">103</span><span class="cd">            }</span></div>
<div class="ln" style="top:399.30px"><span class="no">104</span><span class="cd">        }))</span></div>
<div class="ln" style="top:412.61px"><span class="no">105</span><span class="cd"></span></div>
<div class="ln" style="top:425.92px"><span class="no">106</span><span class="cd">        <span class="c">// Show the prompt</span></span></div>
<div class="ln" style="top:439.23px"><span class="no">107</span><span class="cd">        <span class="k">self</span>.<span class="t">present</span>(alert, animated: <span class="k">true</span>)</span></div>
<div class="ln" style="top:452.54px"><span class="no">108</span><span class="cd">    }</span></div>
<div class="ln" style="top:465.85px"><span class="no">109</span><span class="cd"></span></div>
<div class="ln" style="top:479.16px"><span class="no">110</span><span class="cd">    <span class="k">func</span> insertLogbook(logbook: <span class="g">Logbook</span>) {</span></div>
<div class="ln" style="top:492.47px"><span class="no">111</span><span class="cd">        <span class="g">objects</span>.<span class="t">insert</span>(logbook, at: <span class="n">0</span>)</span></div>
<div class="ln" style="top:505.78px"><span class="no">112</span><span class="cd">        <span class="k">let</span> indexPath = <span class="t">IndexPath</span>(row: <span class="n">0</span>, section: <span class="n">0</span>)</span></div>
<div class="ln" style="top:519.09px"><span class="no">113</span><span class="cd">        <span class="t">tableView</span>.<span class="t">insertRows</span>(at: [indexPath], with: .<span class="t">automatic</span>)</span></div>
<div class="ln" style="top:532.40px"><span class="no">114</span><span class="cd">    }</span></div>
<div class="ln" style="top:545.71px"><span class="no">115</span><span class="cd"></span></div>
<div class="ln" style="top:559.02px"><span class="no">116</span><span class="cd">    <span class="k">override func</span> viewWillAppear(<span class="k">_</span> animated: <span class="t">Bool</span>) {</span></div>
<div class="ln" style="top:572.33px"><span class="no">117</span><span class="cd">        <span class="t">clearsSelectionOnViewWillAppear</span> = <span class="t">splitViewController</span>!.<span class="t">isCollapsed</span></span></div>
  </div>
  
  <div class="abs" style="left:459px;top:331px;width:17px;height:14px;background:#84753a"></div>
  <div class="abs" style="left:477px;top:331px;width:98px;height:14px;background:#84753a"></div>
  <svg class="abs" style="left:463px;top:333.3px" width="9.6" height="9" viewBox="0 0 11 10"><path d="M5.5 0.6L10.4 9.4H0.6Z" fill="#f0c44a" stroke="#f0c44a" stroke-linejoin="round" stroke-width="1"/><path d="M5.5 3.4V6.4M5.5 7.3V8.3" stroke="#fff6d8" stroke-width="1.1"/></svg>
  <div class="abs" style="left:481px;top:332px;line-height:14.5px;font-size:10px;color:#ece6d0;white-space:nowrap;-webkit-text-stroke:0.2px #ece6d0">Variable 'logbook' was never mutated</div>

</div>
<div id="dbg">
  <svg class="abs" style="left:7px;top:6px" width="12" height="10" viewBox="0 0 12 10"><rect x="0.6" y="0.6" width="10.8" height="8.8" stroke="#b7b5b3" stroke-width="1.1" fill="none"/><path d="M3.2 7.2L6 4.2L8.8 7.2Z" fill="#b7b5b3"/></svg>
  <svg class="abs" style="left:31px;top:7px" width="12" height="8" viewBox="0 0 12 8"><path d="M0.4 0.4H8.2L11.6 4L8.2 7.6H0.4Z" fill="#2f6fd0"/></svg>
  <svg class="abs" style="left:57px;top:5.5px" width="10" height="11" viewBox="0 0 10 11"><rect x="0.6" y="0.5" width="3" height="10" rx="0.8" stroke="#b7b5b3" stroke-width="1" fill="none"/><rect x="6.2" y="0.5" width="3" height="10" rx="0.8" stroke="#b7b5b3" stroke-width="1" fill="none"/></svg>
  <svg class="abs" style="left:83px;top:6px" width="11" height="10" viewBox="0 0 11 10"><path d="M1 6.5L5.5 2.5L10 6.5" stroke="#5c5a58" stroke-width="1.1" fill="none"/><path d="M2 9.2H9" stroke="#5c5a58" stroke-width="1.2"/></svg>
  <svg class="abs" style="left:108px;top:6px" width="10" height="10" viewBox="0 0 10 10"><path d="M5 0.5V6M2.5 3.8L5 6.4L7.5 3.8" stroke="#5c5a58" stroke-width="1.1" fill="none"/><path d="M1 9.2H9" stroke="#5c5a58" stroke-width="1.2"/></svg>
  <svg class="abs" style="left:132px;top:6px" width="10" height="10" viewBox="0 0 10 10"><path d="M5 6.4V1M2.5 3.4L5 0.8L7.5 3.4" stroke="#5c5a58" stroke-width="1.1" fill="none"/><path d="M1 9.2H9" stroke="#5c5a58" stroke-width="1.2"/></svg>
  <div class="abs" style="left:149px;top:4px;width:1px;height:14px;background:#4a4846"></div>
  <svg class="abs" style="left:157px;top:5.5px" width="12" height="11" viewBox="0 0 12 11"><rect x="3.2" y="0.6" width="5.6" height="9.8" rx="1" stroke="#b7b5b3" stroke-width="1.1" fill="none"/><path d="M3.2 2.2H1.6Q0.6 2.2 0.6 3.2V7.8Q0.6 8.8 1.6 8.8H3.2M8.8 2.2H10.4Q11.4 2.2 11.4 3.2V7.8Q11.4 8.8 10.4 8.8H8.8" stroke="#b7b5b3" stroke-width="1.1" fill="none"/></svg>
  <svg class="abs" style="left:182px;top:5px" width="12" height="12" viewBox="0 0 12 12"><circle cx="3.6" cy="2.6" r="1.9" stroke="#b7b5b3" stroke-width="1.1" fill="none"/><circle cx="2.6" cy="9" r="1.9" stroke="#b7b5b3" stroke-width="1.1" fill="none"/><circle cx="9.4" cy="7" r="1.9" stroke="#b7b5b3" stroke-width="1.1" fill="none"/><path d="M3.3 4.5L2.9 7.1M5.2 3.8L8 5.7M4.4 8.4L7.5 7.5" stroke="#b7b5b3" stroke-width="1"/></svg>
  <svg class="abs" style="left:206px;top:5.5px" width="12" height="11" viewBox="0 0 12 11"><path d="M11.2 0.6L6.4 10.4L5.6 5.8L0.8 4.8Z" stroke="#b7b5b3" stroke-width="1.1" fill="none" stroke-linejoin="round"/></svg>
  <div class="abs" style="left:224.5px;top:4px;width:1px;height:14px;background:#4a4846"></div>
  <div class="abs" style="left:230px;top:5.5px;width:11.5px;height:11.5px;border-radius:2.5px;background:#6f6d6b"></div>
  <div class="abs" style="left:246px;top:0;line-height:23px;font-size:9.2px;color:#9f9d9b;white-space:nowrap;-webkit-text-stroke:0.2px #9f9d9b">moneylog</div>
</div>

<!-- ======= phone ======= -->
<div id="phoneshadow"></div>
<div class="abs" style="left:893px;top:640px;width:104px;height:8px;border:1px solid #4a4844;border-radius:3px 3px 0 0"></div>
<div id="bezel"></div>
<div class="abs" style="left:783.5px;top:67px;width:4.5px;height:27px;border-radius:1.5px;background:#1b1b1d;border-left:1px solid #262629"></div>
<div class="abs" style="left:783.5px;top:116px;width:4.5px;height:46px;border-radius:1.5px;background:#1b1b1d;border-left:1px solid #262629"></div>
<div class="abs" style="left:783.5px;top:170px;width:4.5px;height:46px;border-radius:1.5px;background:#1b1b1d;border-left:1px solid #262629"></div>
<div id="screen">
  <div id="notch"></div>
  
  <div class="abs" style="left:0;top:0;width:288px;height:67px;background:#999999"></div>
  <div class="abs" style="left:0;top:66.5px;width:288px;height:1px;background:#909090"></div>
<div class="line" style="top:96.0px;background:#989898"></div>
<div class="line" style="top:125.5px"></div>
<div class="line" style="top:155.0px"></div>
<div class="line" style="top:184.5px"></div>
<div class="line" style="top:214.0px"></div>
<div class="line" style="top:243.5px"></div>
<div class="line" style="top:273.0px"></div>
<div class="line" style="top:302.5px"></div>
<div class="line" style="top:332.0px"></div>
<div class="line" style="top:361.5px"></div>
<div class="line" style="top:391.0px"></div>
<div class="line" style="top:420.5px"></div>
<div class="line" style="top:450.0px"></div>
<div class="line" style="top:479.5px"></div>
<div class="line" style="top:509.0px"></div>
<div class="line" style="top:538.5px"></div>
<div class="line" style="top:568.0px"></div>
<div class="line" style="top:597.5px"></div>
<div class="line" style="top:627.0px"></div>

  <div id="notch"></div>
  <div class="ptxt" style="left:20.5px;top:11px;line-height:14px;font-size:12px;font-weight:bold;letter-spacing:0.15px">12:35</div>
  <div class="ptxt" style="left:13px;top:43px;line-height:16px;font-size:12.6px;color:#7d7d7d">Edit</div>
  <div class="ptxt" style="left:44px;width:200px;text-align:center;top:43px;line-height:16px;font-size:12.7px;letter-spacing:0.25px;font-weight:bold;color:#1a1a1a">My Logbooks</div>
  <div class="ptxt" style="left:13px;top:75px;line-height:16px;font-size:12.9px;letter-spacing:0.12px;color:#1c1c1c">Another Logbook Name</div>
  <div class="ptxt" style="left:13px;top:104.9px;line-height:16px;font-size:12.9px;letter-spacing:0.12px;color:#1c1c1c">Some Logbook Name</div>
  <div id="alert">
    <div class="ptxt" style="left:0;width:206px;text-align:center;top:15px;line-height:16px;font-size:12.8px;font-weight:bold;color:#111">Create Logbook</div>
    <div class="abs" style="left:12.5px;top:45.5px;width:200px;height:19.5px;background:#fff;border:1px solid #e2e2e2"></div>
    <div class="ptxt" style="left:15px;top:48.5px;line-height:14px;font-size:10.5px;letter-spacing:0.18px;color:#2e2e2e">My new logbook</div>
    <div class="abs" style="left:0;top:73.5px;width:206px;height:1px;background:#efefef"></div>
    <div class="abs" style="left:103px;top:74px;width:1px;height:34px;background:#efefef"></div>
    <div class="ptxt" style="left:0;width:103px;text-align:center;top:84px;line-height:16px;font-size:13.2px;letter-spacing:0.15px;color:#3478d6;-webkit-text-stroke:0.2px #3478d6">Cancel</div>
    <div class="ptxt" style="left:104px;width:102px;text-align:center;top:84px;line-height:16px;font-size:13.2px;color:#3478d6">OK</div>
  </div>
  <div class="abs" style="left:93.5px;top:615.5px;width:102.5px;height:4px;border-radius:2px;background:#060606"></div>

</div>
</body></html>
